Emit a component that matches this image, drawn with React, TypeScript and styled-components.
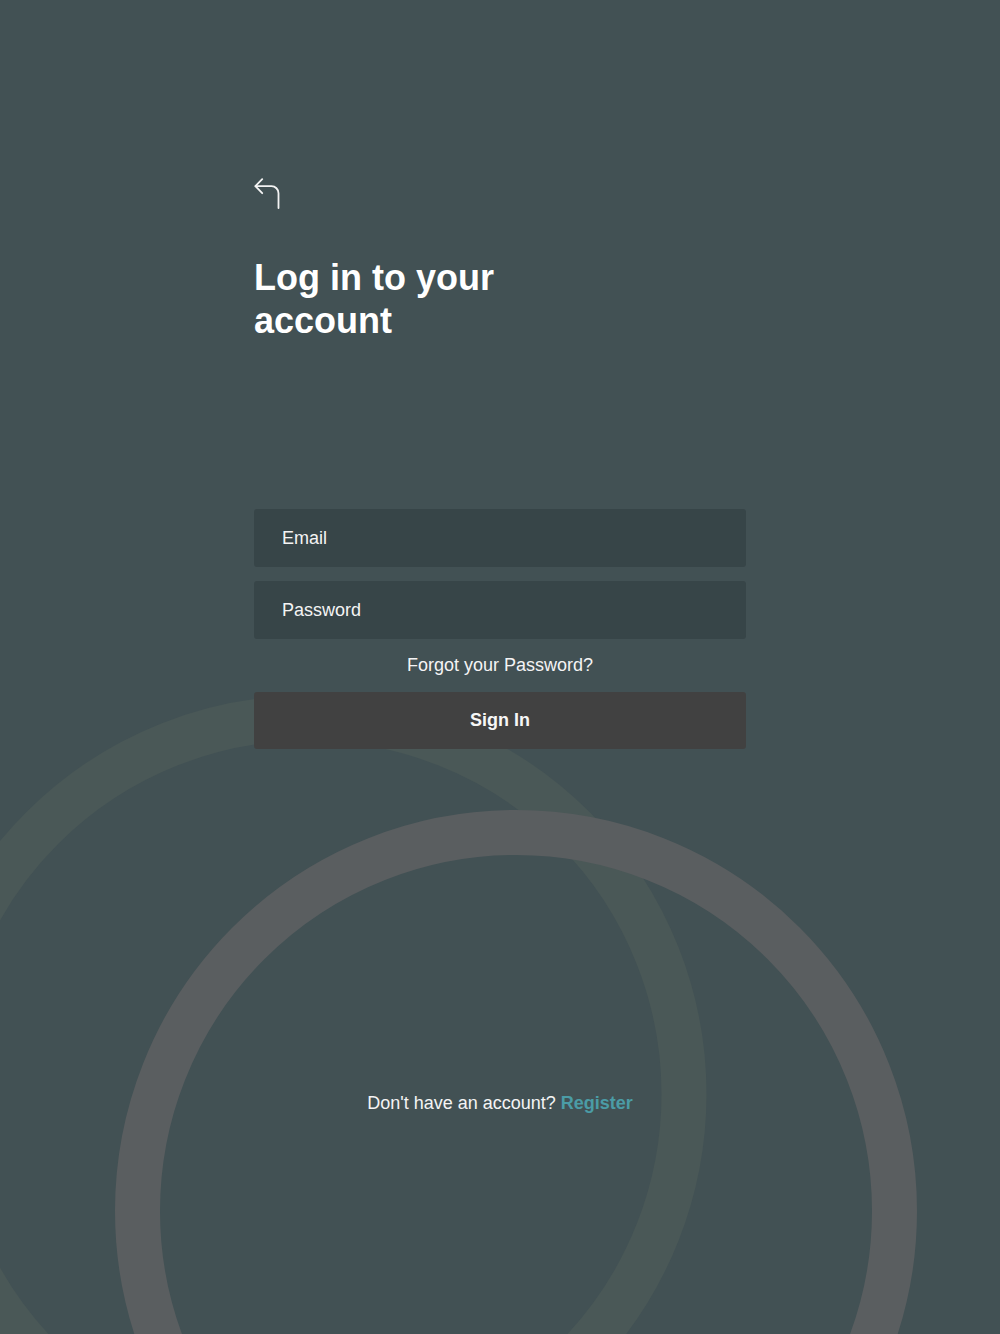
import React from "react";
import styled, { createGlobalStyle } from "styled-components";

const GlobalStyle = createGlobalStyle`
  html, body {
    margin: 0;
    padding: 0;
    background: #425154;
  }
  body {
    font-family: "Liberation Sans", Arial, Helvetica, sans-serif;
    -webkit-font-smoothing: antialiased;
  }
  * { box-sizing: border-box; }
`;

const Page = styled.main`
  position: relative;
  min-height: 1334px;
  background: #425154;
  overflow: hidden;
`;

const Backdrop = styled.svg`
  position: absolute;
  inset: 0;
  width: 1000px;
  height: 1334px;
  pointer-events: none;
`;

const Column = styled.div`
  position: relative;
  width: 492px;
  margin: 0 auto;
  padding-top: 178px;
  display: flex;
  flex-direction: column;
`;

const BackButton = styled.button`
  display: flex;
  align-self: flex-start;
  padding: 0;
  margin: 0;
  border: 0;
  background: transparent;
  cursor: pointer;
  color: #f4f4f4;
`;

const Title = styled.h1`
  margin: 47px 0 0;
  font-size: 36px;
  line-height: 43px;
  font-weight: 700;
  color: #ffffff;
`;

const Form = styled.form`
  margin-top: 167px;
  display: flex;
  flex-direction: column;
  gap: 14px;
`;

const Field = styled.input`
  display: block;
  width: 100%;
  height: 58px;
  padding: 0 28px;
  border: 0;
  border-radius: 3px;
  background: #374548;
  font-family: inherit;
  font-size: 18px;
  color: #f4f4f4;
  outline: none;
  &::placeholder {
    color: #f4f4f4;
    opacity: 1;
  }
`;

const Actions = styled.div`
  display: flex;
  flex-direction: column;
`;

const ForgotLink = styled.a`
  display: block;
  padding: 16px 0;
  text-align: center;
  font-size: 18px;
  line-height: 21px;
  color: #f4f4f4;
  text-decoration: none;
  cursor: pointer;
`;

const SignInButton = styled.button`
  height: 57px;
  width: 100%;
  border: 0;
  border-radius: 3px;
  background: #414141;
  font-family: inherit;
  font-size: 18px;
  font-weight: 700;
  color: #f6f6f6;
  cursor: pointer;
`;

const Footer = styled.p`
  margin: 344px 0 0;
  text-align: center;
  font-size: 18px;
  line-height: 21px;
  color: #f4f4f4;
`;

const RegisterLink = styled.a`
  font-weight: 700;
  color: #4b9ca6;
  text-decoration: none;
  cursor: pointer;
`;

const BackIcon = () => (
  <svg width="27" height="31" viewBox="0 0 27 31" fill="none">
    <path
      d="M8.2 1.2 L1.4 8.2 L8.2 15.2"
      stroke="currentColor"
      strokeWidth="1.8"
      strokeLinecap="round"
      strokeLinejoin="round"
    />
    <path
      d="M1.6 8.2 H17.5 a7 7 0 0 1 7 7 V30"
      stroke="currentColor"
      strokeWidth="1.8"
      strokeLinecap="round"
      strokeLinejoin="round"
    />
  </svg>
);

export default function App() {
  return (
    <>
      <GlobalStyle />
      <Page>
        <Backdrop viewBox="0 0 1000 1334" aria-hidden="true">
          <circle cx="308" cy="1094" r="376" fill="none" stroke="#4a5857" strokeWidth="45" />
          <circle cx="516" cy="1211" r="378.5" fill="none" stroke="#5a5e60" strokeWidth="45" />
        </Backdrop>
        <Column>
          <BackButton type="button" aria-label="Back">
            <BackIcon />
          </BackButton>
          <Title>
            Log in to your
            <br />
            account
          </Title>
          <Form onSubmit={(e) => e.preventDefault()}>
            <Field type="email" placeholder="Email" />
            <Field type="password" placeholder="Password" />
          </Form>
          <Actions>
            <ForgotLink>Forgot your Password?</ForgotLink>
            <SignInButton type="button">Sign In</SignInButton>
          </Actions>
          <Footer>
            Don't have an account? <RegisterLink>Register</RegisterLink>
          </Footer>
        </Column>
      </Page>
    </>
  );
}
